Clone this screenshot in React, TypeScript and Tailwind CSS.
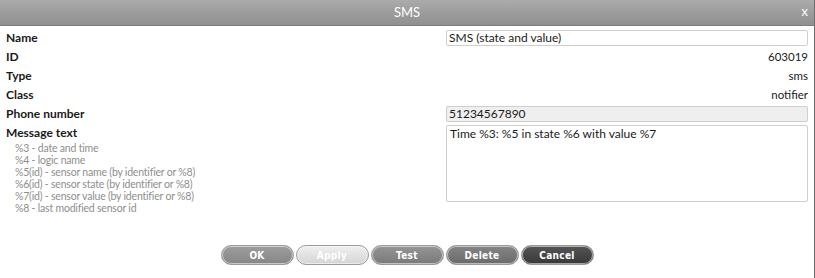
import React from "react";

const rowLabel = "text-[12px] font-bold text-[#1a1a1a] leading-[19px]";

function Btn({ label, cls }: { label: string; cls: string }) {
  return (
    <div
      className={`w-[73px] h-[20px] rounded-full border border-[#9a9a9a] shadow-[inset_0_0_0_1px_rgba(255,255,255,0.55)] flex items-center justify-center text-[10px] font-bold text-white tracking-[0.3px] ${cls}`}
      style={{ fontFamily: '"DejaVu Sans Condensed", "DejaVu Sans", sans-serif' }}
    >
      {label}
    </div>
  );
}

export default function App() {
  const help = [
    "%3 - date and time",
    "%4 - logic name",
    "%5(id) - sensor name (by identifier or %8)",
    "%6(id) - sensor state (by identifier or %8)",
    "%7(id) - sensor value (by identifier or %8)",
    "%8 - last modified sensor id",
  ];
  return (
    <div
      className="w-[815px] h-[278px] bg-white flex flex-col border-r border-[#6f6f6f]"
      style={{ fontFamily: 'Lato, "Open Sans", sans-serif' }}
    >
      <div className="h-[26px] shrink-0 relative flex items-center justify-center bg-gradient-to-b from-[#ababab] to-[#8f8f8f] border-b border-[#7d7d7d]">
        <span className="text-white text-[13px]">SMS</span>
        <span className="absolute right-[6px] top-[5px] text-white text-[13px] leading-none">x</span>
      </div>
      <div className="flex pl-[6px] pr-[6px] pt-[2px]">
        <div className="w-[440px] flex flex-col">
          <div className={rowLabel}>Name</div>
          <div className={rowLabel}>ID</div>
          <div className={rowLabel}>Type</div>
          <div className={rowLabel}>Class</div>
          <div className={rowLabel}>Phone number</div>
          <div className={rowLabel}>Message text</div>
          <div className="pl-[9px] flex flex-col text-[10.5px] leading-[12px] text-[#8e8e8e] tracking-[-0.2px]">
            {help.map((h) => (
              <div key={h}>{h}</div>
            ))}
          </div>
        </div>
        <div className="flex-1 flex flex-col text-[12px] text-[#1a1a1a]">
          <div className="h-[19px] flex items-center">
            <div className="w-full h-[16px] border border-[#cfcfcf] rounded-[2px] px-[2px] leading-[14px] bg-white">SMS (state and value)</div>
          </div>
          <div className="h-[19px] leading-[19px] text-right text-[11.5px]">603019</div>
          <div className="h-[19px] leading-[19px] text-right text-[11.5px]">sms</div>
          <div className="h-[19px] leading-[19px] text-right text-[11.5px]">notifier</div>
          <div className="h-[19px] flex items-center">
            <div className="w-full h-[16px] border border-[#cfcfcf] rounded-[2px] px-[2px] leading-[14px] bg-[#efefef]">51234567890</div>
          </div>
          <div className="mt-[2px] h-[77px] border border-[#cfcfcf] rounded-[2px] px-[3px] pt-[1px] leading-[14px] bg-white">
            Time %3: %5 in state %6 with value %7
          </div>
        </div>
      </div>
      <div className="flex-1 flex items-end justify-center pb-[13px] gap-[2px]">
        <Btn label="OK" cls="bg-gradient-to-b from-[#9e9e9e] to-[#868686]" />
        <Btn label="Apply" cls="bg-gradient-to-b from-[#f0f0f0] to-[#d4d4d4]" />
        <Btn label="Test" cls="bg-gradient-to-b from-[#959595] to-[#7a7a7a]" />
        <Btn label="Delete" cls="bg-gradient-to-b from-[#858585] to-[#6a6a6a]" />
        <Btn label="Cancel" cls="bg-gradient-to-b from-[#555555] to-[#383838]" />
      </div>
    </div>
  );
}
